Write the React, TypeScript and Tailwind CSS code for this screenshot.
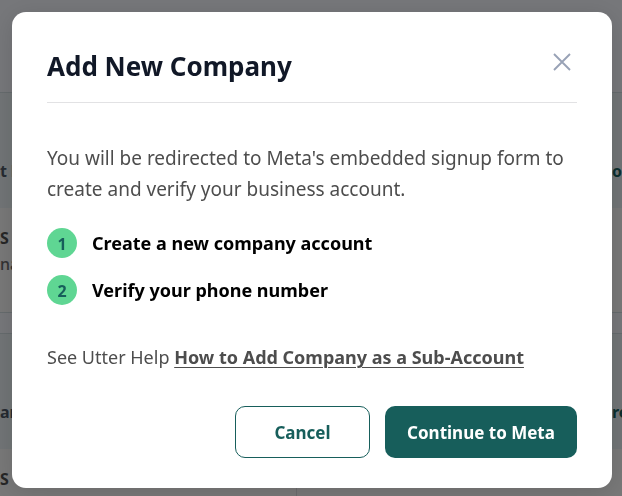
interface Account {
  id: number;
  name: string;
  action: string;
  heading: string;
  detail: string;
}

const accounts: Account[] = [
  { id: 1, name: 't l', action: 'o', heading: 's', detail: 'na' },
  { id: 2, name: 'are', action: 're', heading: 's', detail: '' },
];

const steps = ['Create a new company account', 'Verify your phone number'];

/**
 * Account card, mostly covered by the dialog.
 */
const AccountCard = ({ account }: { account: Account }) => (
  <section className="border-y border-[#cbd6da] bg-[#f1f0f0]">
    <div className="flex h-[115px] items-end justify-between bg-[#e2e9ec] pb-[25px] text-base font-bold">
      <span className="whitespace-nowrap text-[#4b5563]">{account.name}</span>
      <span className="w-[10px] whitespace-nowrap text-[#175e5b]">{account.action}</span>
    </div>
    <div className="flex h-[104px]">
      <div className="w-[296px] shrink-0 pt-4">
        <p className="text-base leading-7 font-bold text-[#4d4d4d] uppercase">{account.heading}</p>
        <p className="text-base leading-6 font-medium text-[#666]">{account.detail}</p>
      </div>
      <div className="flex-1 border-l border-[#d6d6da]" />
    </div>
  </section>
);

/**
 * Dialog shown before the user is sent to Meta's signup form.
 */
const AddCompanyModal = () => (
  <div className="fixed inset-0 z-50 flex items-start justify-center overflow-hidden bg-black/50 pt-3 pr-[10px] pl-3">
    <div
      role="dialog"
      aria-modal="true"
      aria-labelledby="modal-title"
      className="w-full max-w-[600px] rounded-[14px] bg-white px-[35px] pt-[30px] pb-[30px] shadow-[0_4px_24px_rgba(0,0,0,0.12)]"
    >
      {/* Header */}
      <div className="flex items-center justify-between border-b border-[#e2e2e4] pb-3">
        <h2 id="modal-title" className="text-[26px] leading-[48px] font-bold text-[#111827]">
          Add New Company
        </h2>
        <button type="button" aria-label="Close" className="mb-2 flex size-[30px] items-center justify-center">
          <svg viewBox="0 0 18 18" className="size-[18px]" fill="none" stroke="#98a2b6" strokeWidth="1.9">
            <path d="M1 1l16 16M17 1L1 17" />
          </svg>
        </button>
      </div>

      {/* Body */}
      <p className="pt-10 text-[19px] leading-[31px] text-[#4d4d4d]">
        You will be redirected to Meta's embedded signup form to create and verify your business account.
      </p>
      <ol className="mt-[23px] flex flex-col gap-[17px]">
        {steps.map((step, index) => (
          <li key={step} className="flex items-center gap-[15px]">
            <span className="flex size-[30px] shrink-0 items-center justify-center rounded-full bg-[#5fd693] pt-0.5 text-base font-bold text-[#175e5b]">
              {index + 1}
            </span>
            <span className="text-lg leading-[30px] font-bold text-black">{step}</span>
          </li>
        ))}
      </ol>
      <p className="mt-9 text-lg leading-[32px] text-[#4d4d4d]">
        See Utter Help{' '}
        <a href="#help" className="font-bold underline decoration-1 underline-offset-3">
          How to Add Company as a Sub-Account
        </a>
      </p>

      {/* Actions */}
      <div className="mt-[33px] flex flex-wrap justify-end gap-[15px] text-[17px] font-bold">
        <button type="button" className="h-[52px] min-w-[135px] rounded-[10px] border border-[#175e5b] bg-white px-6 pt-0.5 text-[#175e5b]">
          Cancel
        </button>
        <button type="button" className="h-[52px] min-w-[192px] rounded-[10px] bg-[#175e5b] px-5 pt-0.5 text-white">
          Continue to Meta
        </button>
      </div>
    </div>
  </div>
);

export default function App() {
  return (
    <div className="h-screen overflow-hidden bg-[#edeef5] font-['Segoe_UI','Noto_Sans',sans-serif]">
      <main className="flex flex-col gap-5 pt-[92px]" aria-hidden="true">
        {accounts.map(account => (
          <AccountCard key={account.id} account={account} />
        ))}
      </main>
      <AddCompanyModal />
    </div>
  );
}
